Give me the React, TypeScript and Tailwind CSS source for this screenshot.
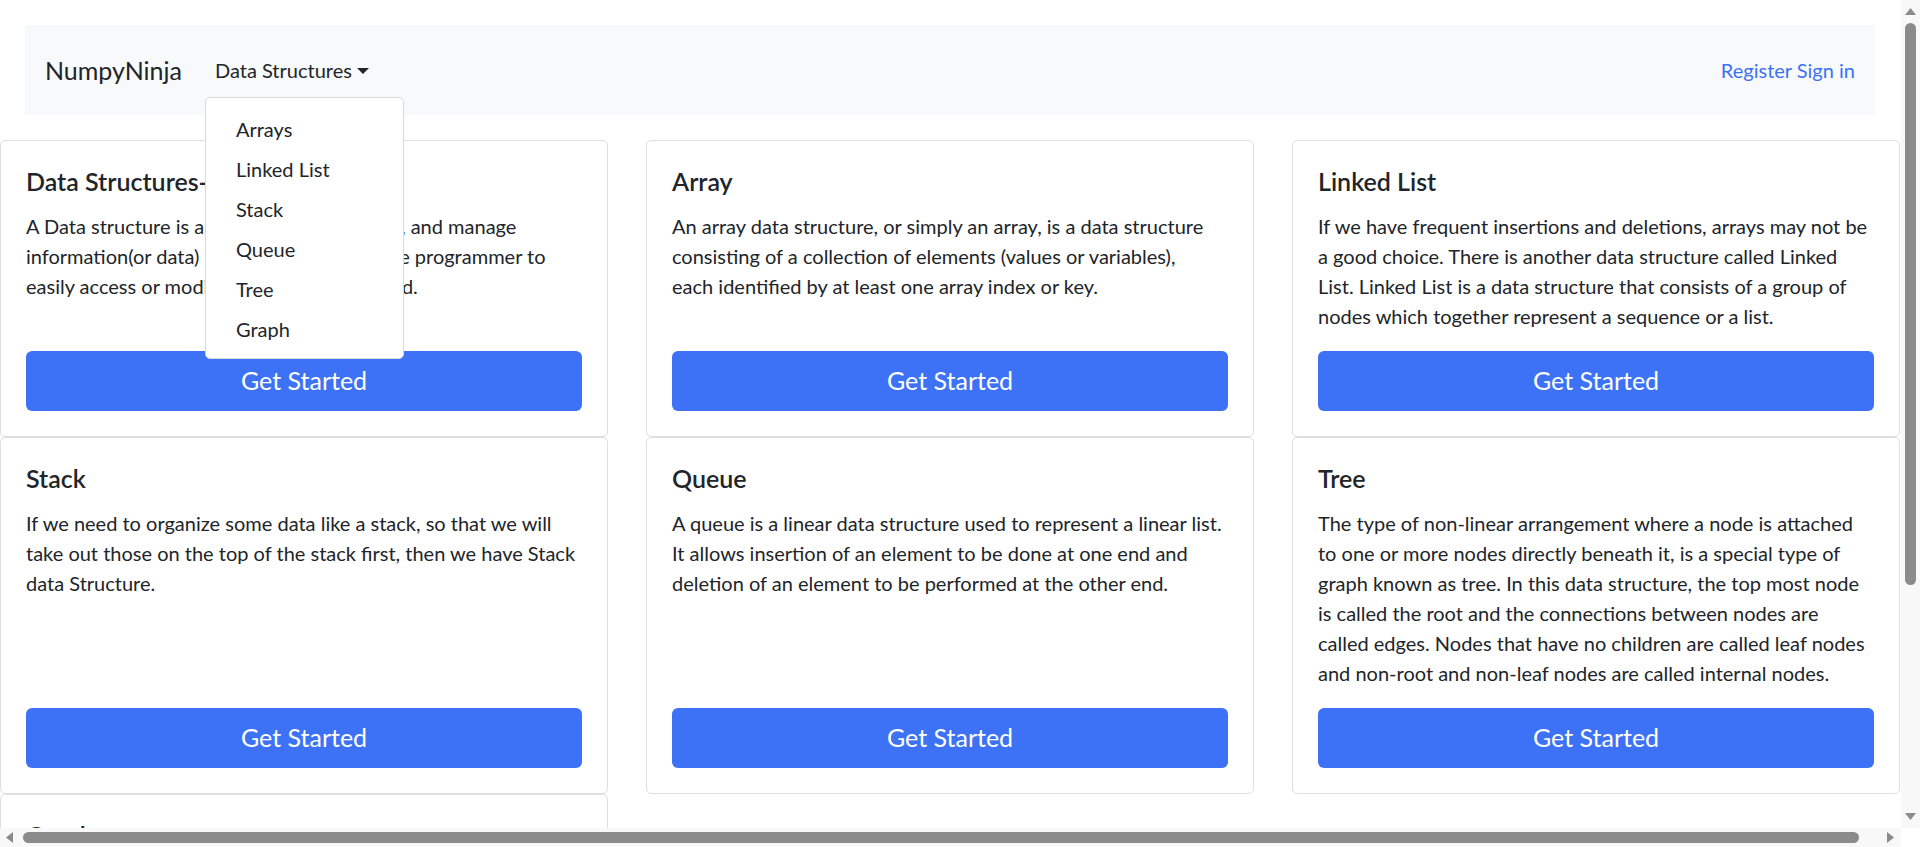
import React from 'react';

const cards = [
  {
    title: 'Data Structures-Introduction',
    text: 'A Data structure is a way to store, organize, and manage information(or data) in a way that allows the programmer to easily access or modify the values as needed.',
  },
  {
    title: 'Array',
    text: 'An array data structure, or simply an array, is a data structure consisting of a collection of elements (values or variables), each identified by at least one array index or key.',
    narrow: true,
  },
  {
    title: 'Linked List',
    text: 'If we have frequent insertions and deletions, arrays may not be a good choice. There is another data structure called Linked List. Linked List is a data structure that consists of a group of nodes which together represent a sequence or a list.',
  },
  {
    title: 'Stack',
    text: 'If we need to organize some data like a stack, so that we will take out those on the top of the stack first, then we have Stack data Structure.',
  },
  {
    title: 'Queue',
    text: 'A queue is a linear data structure used to represent a linear list. It allows insertion of an element to be done at one end and deletion of an element to be performed at the other end.',
  },
  {
    title: 'Tree',
    text: 'The type of non-linear arrangement where a node is attached to one or more nodes directly beneath it, is a special type of graph known as tree. In this data structure, the top most node is called the root and the connections between nodes are called edges. Nodes that have no children are called leaf nodes and non-root and non-leaf nodes are called internal nodes.',
  },
  {
    title: 'Graph',
    text: 'A Graph is a non-linear data structure consisting of vertices and edges. The vertices are sometimes also referred to as nodes and the edges are lines or arcs that connect any two nodes in the graph.',
  },
];

const menu = ['Arrays', 'Linked List', 'Stack', 'Queue', 'Tree', 'Graph'];

// browser window scrollbars (the page is wider and taller than the window)
function Scrollbars() {
  return (
    <>
      <div className="fixed top-0 right-0 z-20 w-[19px] h-[828px] bg-[#f8f8f8]">
        <svg className="absolute left-[4px] top-[8px]" width="11" height="7" viewBox="0 0 11 7">
          <path d="M5.5 0L11 7H0z" fill="#8b8b8b" />
        </svg>
        <div className="absolute left-[4px] top-[23px] w-[11px] h-[562px] rounded-full bg-[#8b8b8b]" />
        <svg className="absolute left-[4px] top-[813px]" width="11" height="7" viewBox="0 0 11 7">
          <path d="M0 0H11L5.5 7z" fill="#8b8b8b" />
        </svg>
      </div>
      <div className="fixed bottom-0 left-0 z-20 w-[1901px] h-[19px] bg-[#f8f8f8]">
        <svg className="absolute left-[6px] top-[4px]" width="7" height="11" viewBox="0 0 7 11">
          <path d="M7 0V11L0 5.5z" fill="#8b8b8b" />
        </svg>
        <div className="absolute left-[23px] top-[4px] w-[1836px] h-[11px] rounded-full bg-[#8b8b8b]" />
        <svg className="absolute left-[1887px] top-[4px]" width="7" height="11" viewBox="0 0 7 11">
          <path d="M0 0V11L7 5.5z" fill="#8b8b8b" />
        </svg>
      </div>
      <div className="fixed bottom-0 right-0 z-20 w-[19px] h-[19px] bg-white" />
    </>
  );
}

export default function App() {
  return (
    <div className="w-screen h-screen overflow-hidden bg-white">
      <div
        className="w-[1968px] min-h-[1165px] bg-white text-[#212529] pb-[15px]"
        style={{ fontFamily: '"Segoe UI", Lato, "Noto Sans", sans-serif' }}
      >
        {/* Navbar */}
        <div className="pt-[25px] w-[1900px]">
          <nav className="mx-[25px] h-[90px] bg-[#f8f9fa] flex items-center justify-between px-[20px]">
            <div className="flex items-center">
              <a href="#" className="text-[25px] leading-[30px] text-[#212529] mr-[33px]">
                NumpyNinja
              </a>
              <div className="relative">
                <button className="flex items-center text-[20px] leading-[30px] text-[#212529]">
                  Data Structures
                  <span className="ml-[5px] mt-[2px] w-0 h-0 border-l-[6px] border-r-[6px] border-t-[6px] border-l-transparent border-r-transparent border-t-[#212529]" />
                </button>
                {/* Dropdown menu */}
                <div className="absolute left-[-10px] top-[42px] z-10 w-[199px] bg-white border border-[#d9d9d9] rounded-[5px] pt-[11px] pb-[9px]">
                  {menu.map((m) => (
                    <a
                      key={m}
                      href="#"
                      className="block px-[30px] py-[5px] text-[20px] leading-[30px] text-[#212529]"
                    >
                      {m}
                    </a>
                  ))}
                </div>
              </div>
            </div>
            <div className="text-[20px] leading-[30px] text-[#3d72f6]">
              <a href="#">Register</a> <a href="#">Sign in</a>
            </div>
          </nav>
        </div>

        {/* Cards */}
        <div className="mt-[25px] grid grid-cols-[608px_608px_608px] gap-x-[38px]">
          {cards.map((c) => (
            <div
              key={c.title}
              className="flex flex-col border border-[#dfdfdf] rounded-[5px] bg-white p-[25px]"
            >
              <h5 className="text-[25px] leading-[30px] font-semibold mb-[15px]">{c.title}</h5>
              <p className={c.narrow ? 'text-[20px] leading-[30px] mb-[20px] pr-[10px]' : 'text-[20px] leading-[30px] mb-[20px]'}>
                {c.text}
              </p>
              <button className="mt-auto h-[60px] w-full rounded-[6px] bg-[#3d72f6] text-white text-[25px]">
                Get Started
              </button>
            </div>
          ))}
        </div>
      </div>
      <Scrollbars />
    </div>
  );
}
